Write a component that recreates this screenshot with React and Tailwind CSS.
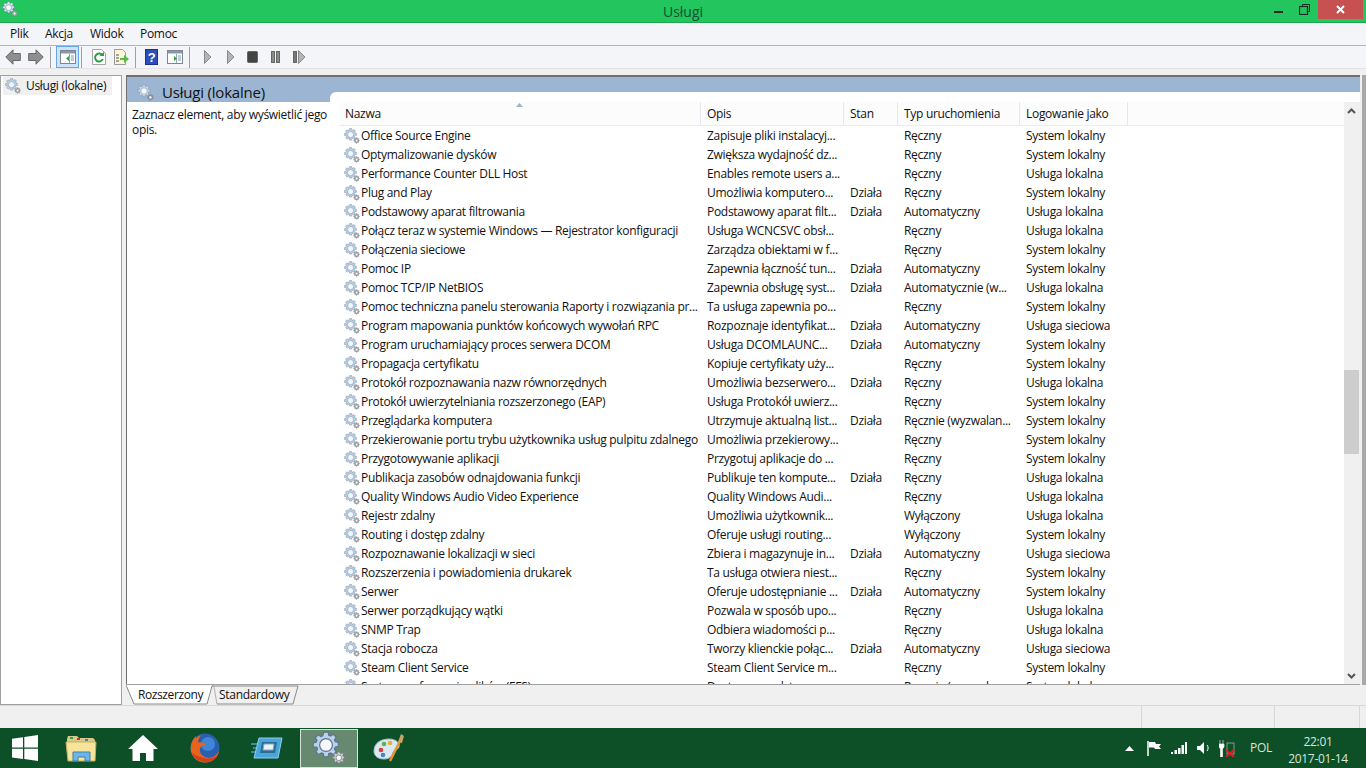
import React from "react";

const services = [
  ["Office Source Engine", "Zapisuje pliki instalacyj...", "", "Ręczny", "System lokalny"],
  ["Optymalizowanie dysków", "Zwiększa wydajność dz...", "", "Ręczny", "System lokalny"],
  ["Performance Counter DLL Host", "Enables remote users a...", "", "Ręczny", "Usługa lokalna"],
  ["Plug and Play", "Umożliwia komputero...", "Działa", "Ręczny", "System lokalny"],
  ["Podstawowy aparat filtrowania", "Podstawowy aparat filt...", "Działa", "Automatyczny", "Usługa lokalna"],
  ["Połącz teraz w systemie Windows — Rejestrator konfiguracji", "Usługa WCNCSVC obsł...", "", "Ręczny", "Usługa lokalna"],
  ["Połączenia sieciowe", "Zarządza obiektami w f...", "", "Ręczny", "System lokalny"],
  ["Pomoc IP", "Zapewnia łączność tun...", "Działa", "Automatyczny", "System lokalny"],
  ["Pomoc TCP/IP NetBIOS", "Zapewnia obsługę syst...", "Działa", "Automatycznie (w...", "Usługa lokalna"],
  ["Pomoc techniczna panelu sterowania Raporty i rozwiązania pr...", "Ta usługa zapewnia po...", "", "Ręczny", "System lokalny"],
  ["Program mapowania punktów końcowych wywołań RPC", "Rozpoznaje identyfikat...", "Działa", "Automatyczny", "Usługa sieciowa"],
  ["Program uruchamiający proces serwera DCOM", "Usługa DCOMLAUNC...", "Działa", "Automatyczny", "System lokalny"],
  ["Propagacja certyfikatu", "Kopiuje certyfikaty uży...", "", "Ręczny", "System lokalny"],
  ["Protokół rozpoznawania nazw równorzędnych", "Umożliwia bezserwero...", "Działa", "Ręczny", "Usługa lokalna"],
  ["Protokół uwierzytelniania rozszerzonego (EAP)", "Usługa Protokół uwierz...", "", "Ręczny", "System lokalny"],
  ["Przeglądarka komputera", "Utrzymuje aktualną list...", "Działa", "Ręcznie (wyzwalan...", "System lokalny"],
  ["Przekierowanie portu trybu użytkownika usług pulpitu zdalnego", "Umożliwia przekierowy...", "", "Ręczny", "System lokalny"],
  ["Przygotowywanie aplikacji", "Przygotuj aplikacje do ...", "", "Ręczny", "System lokalny"],
  ["Publikacja zasobów odnajdowania funkcji", "Publikuje ten kompute...", "Działa", "Ręczny", "Usługa lokalna"],
  ["Quality Windows Audio Video Experience", "Quality Windows Audi...", "", "Ręczny", "Usługa lokalna"],
  ["Rejestr zdalny", "Umożliwia użytkownik...", "", "Wyłączony", "Usługa lokalna"],
  ["Routing i dostęp zdalny", "Oferuje usługi routing...", "", "Wyłączony", "System lokalny"],
  ["Rozpoznawanie lokalizacji w sieci", "Zbiera i magazynuje in...", "Działa", "Automatyczny", "Usługa sieciowa"],
  ["Rozszerzenia i powiadomienia drukarek", "Ta usługa otwiera niest...", "", "Ręczny", "System lokalny"],
  ["Serwer", "Oferuje udostępnianie ...", "Działa", "Automatyczny", "System lokalny"],
  ["Serwer porządkujący wątki", "Pozwala w sposób upo...", "", "Ręczny", "Usługa lokalna"],
  ["SNMP Trap", "Odbiera wiadomości p...", "", "Ręczny", "Usługa lokalna"],
  ["Stacja robocza", "Tworzy klienckie połąc...", "Działa", "Automatyczny", "Usługa sieciowa"],
  ["Steam Client Service", "Steam Client Service m...", "", "Ręczny", "System lokalny"],
  ["System szyfrowania plików (EFS)", "Dostarcza podstawow...", "", "Ręcznie (wyzwalan...", "System lokalny"],
];

const gearPath =
  "M10.2 1h3.6l.5 2.6 1.7.7 2.2-1.5 2.5 2.5-1.5 2.2.7 1.7 2.6.5v3.6l-2.6.5-.7 1.7 1.5 2.2-2.5 2.5-2.2-1.5-1.7.7-.5 2.6h-3.6l-.5-2.6-1.7-.7-2.2 1.5-2.5-2.5 1.5-2.2-.7-1.7L1 13.8v-3.6l2.6-.5.7-1.7-1.5-2.2 2.5-2.5 2.2 1.5 1.700-.7z";

const Gears = ({ size = 16, main = "#b9cfe6", small = "#9aa2aa", stroke = "#8296ad" }) => (
  <svg width={size} height={size} viewBox="0 0 32 32" className="shrink-0">
    <g transform="scale(1.1)">
      <path d={gearPath} fill={main} stroke={stroke} strokeWidth="1" />
      <circle cx="12" cy="12" r="5.500" fill="#f4f8fc" stroke={stroke} strokeWidth="1" />
    </g>
    <g transform="translate(19 19) scale(0.52)">
      <path d={gearPath} fill={small} stroke="#777" strokeWidth="1.4" />
      <circle cx="12" cy="12" r="5" fill="#fff" stroke="#777" strokeWidth="1.4" />
    </g>
  </svg>
);

const Sep = () => <div className="h-[21px] w-px shrink-0 bg-[#a0a0a0]" />;

const WindowIcon = ({ arrow = "M8 10l-3 2.5L8 15z" }) => (
  <svg width="16" height="16" viewBox="0 0 16 16">
    <rect x=".5" y="1.5" width="15" height="13" fill="#fff" stroke="#7b8794" />
    <rect x="1" y="2" width="14" height="2.5" fill="#8b97a5" />
    <path d="M9.500 5v9" stroke="#9aa5b1" />
    <path d="M11 7h3M11 9h3M11 11h3" stroke="#7a9cc0" />
    <path d={arrow} transform="translate(1 -3)" fill="#2f9e44" />
  </svg>
);

const Toolbar = () => (
  <div className="flex h-[22px] shrink-0 items-center bg-[#f4f5f8] pl-[5px]">
    <svg width="16" height="16" viewBox="0 0 16 16" className="mr-[7px]">
      <path d="M.8 8L8 .8V4.500h7.300v7H8v3.700z" fill="#8f8f8f" stroke="#686868" />
    </svg>
    <svg width="16" height="16" viewBox="0 0 16 16" className="mr-[6px]">
      <path d="M15.200 8L8 .8V4.500H.7v7H8v3.700z" fill="#8f8f8f" stroke="#686868" />
    </svg>
    <Sep />
    <div className="ml-[5px] mr-[2px] flex h-[22px] w-[23px] items-center justify-center border border-[#66a7e8] bg-[#cce4f7]">
      <WindowIcon />
    </div>
    <Sep />
    <svg width="14" height="16" viewBox="0 0 14 16" className="ml-[10px]">
      <path d="M.5.5h9l4 4v11H.5z" fill="#fff" stroke="#a5a5a5" />
      <path d="M10.500 6.500a4 4 0 1 0 .3 3.500" fill="none" stroke="#2f9e44" strokeWidth="2" />
      <path d="M7.500 7h4.500V2.800z" fill="#2f9e44" />
    </svg>
    <svg width="17" height="16" viewBox="0 0 17 16" className="ml-[7px] mr-[5px]">
      <path d="M1.500.5h8l3 3v12h-11z" fill="#fbf5d8" stroke="#9a9a9a" />
      <path d="M3 6h3M3 9h3M3 12h3" stroke="#555" />
      <path d="M7 9h4V6l5 4-5 4v-3H7z" fill="#58b947" />
    </svg>
    <Sep />
    <div className="ml-[9px] mr-[9px] flex h-[16px] w-[13px] items-center justify-center border border-[#1c2f8f] bg-[#2c4dbb] font-['Liberation_Sans',sans-serif] text-[13px] font-bold leading-none text-white">
      ?
    </div>
    <div className="mr-[6px] flex">
      <WindowIcon arrow="M6 10l3 2.500L6 15z" />
    </div>
    <Sep />
    <svg width="102" height="16" viewBox="0 0 102 16" className="ml-[14px]">
      <path d="M.5 1.500l6.500 6.500-6.500 6.500z" fill="#b4b4b4" stroke="#8a8a8a" />
      <path d="M23.500 1.500l6.500 6.500-6.500 6.500z" fill="#b4b4b4" stroke="#8a8a8a" />
      <rect x="43.500" y="2.500" width="10" height="11" rx="1" fill="#444" stroke="#666" />
      <rect x="67.500" y="2.500" width="3" height="11" fill="#8a8a8a" stroke="#666" />
      <rect x="72.500" y="2.500" width="3" height="11" fill="#8a8a8a" stroke="#666" />
      <rect x="89.500" y="2.500" width="3" height="11" fill="#777" stroke="#666" />
      <path d="M94.500 1.500l6.500 6.500-6.500 6.500z" fill="#b4b4b4" stroke="#8a8a8a" />
    </svg>
  </div>
);

const Row = ({ row }) => (
  <div className="flex h-[19px] items-center whitespace-nowrap text-[12px] leading-[19px] text-[#111]">
    <div className="flex w-[362px] shrink-0 items-center pl-[5px]">
      <Gears />
      <span className="ml-[1px]">{row[0]}</span>
    </div>
    <div className="w-[143px] shrink-0 pl-[6px]">{row[1]}</div>
    <div className="w-[54px] shrink-0 pl-[6px]">{row[2]}</div>
    <div className="w-[122px] shrink-0 pl-[6px]">{row[3]}</div>
    <div className="pl-[6px]">{row[4]}</div>
  </div>
);

const Head = ({ w, children }) => (
  <div className={`flex h-full shrink-0 items-center border-r border-[#e3e8ef] pl-[6px] ${w}`}>{children}</div>
);

export default function App() {
  return (
    <div className="flex h-[768px] w-[1366px] flex-col overflow-hidden bg-[#f0f0f0] font-['Open_Sans',sans-serif] text-[12px] tracking-[-0.3px] text-[#111]">
      {/* title bar */}
      <div className="relative flex h-[23px] shrink-0 items-center justify-center border-b border-[#1ca64e] bg-[#22c55e] text-[14px] tracking-normal text-[#14532d]">
        <div className="absolute left-[2px] top-[1px]">
          <Gears size={16} main="#d7e6f3" small="#a8b9c7" stroke="#5b7c8c" />
        </div>
        Usługi
        <div className="absolute right-[3px] top-0 flex items-start">
          <div className="mr-[16px] mt-[11px] h-[2px] w-[9px] bg-[#1d2b22]" />
          <svg width="11" height="11" viewBox="0 0 11 11" className="mr-[8px] mt-[4px]">
            <path d="M3.500 2.500v-2h7v7h-2" fill="none" stroke="#1d2b22" />
            <rect x=".5" y="2.500" width="8" height="8" fill="none" stroke="#1d2b22" strokeWidth="1.2" />
          </svg>
          <div className="flex h-[19px] w-[45px] items-center justify-center bg-[#c75050]">
            <svg width="9" height="9" viewBox="0 0 9 9">
              <path d="M1 1l7 7M8 1L1 8" stroke="#fff" strokeWidth="2" />
            </svg>
          </div>
        </div>
      </div>

      {/* menu */}
      <div className="flex h-[23px] shrink-0 items-center border-b border-[#b5b5b5] bg-[#f4f5f8] pl-[10px]">
        <span className="w-[35px]">Plik</span>
        <span className="w-[45px]">Akcja</span>
        <span className="w-[50px]">Widok</span>
        <span>Pomoc</span>
      </div>

      <Toolbar />

      {/* panes */}
      <div className="flex h-[637px] shrink-0 border-t border-[#e4e4e4] pt-[6px]">
        <div className="h-[630px] w-[122px] shrink-0 border border-[#a0a0a0] bg-white pl-[2px]">
          <div className="flex h-[19px] w-[109px] items-center gap-[5px] whitespace-nowrap bg-[#f0f0f0] pl-[2px] text-[12px]">
            <Gears />
            <span>Usługi (lokalne)</span>
          </div>
        </div>

        <div className="ml-[4px] flex w-[1234px] shrink-0 flex-col">
          <div className="flex h-[609px] flex-col border-l border-t-2 border-[#6f6f6f]">
            <div className="relative flex h-[25px] shrink-0 items-center gap-[8px] bg-[#9bb5d2] pl-[10px] pt-[5px] text-[15px] tracking-[-0.2px] text-[#111]">
              <Gears size={17} main="#c5d6e8" small="#8c9cad" />
              <span>Usługi (lokalne)</span>
              <div className="absolute bottom-0 left-[203px] right-0 h-[10px] rounded-tl-[6px] bg-white" />
            </div>

            <div className="flex min-h-0 flex-1 bg-white">
              <div className="w-[212px] shrink-0 pl-[5px] pr-[2px] pt-[5px] text-[12px] leading-[15px]">
                Zaznacz element, aby wyświetlić jego opis.
              </div>

              <div className="relative min-w-0 flex-1 overflow-hidden">
                <div className="relative flex h-[24px] items-center border-b border-[#e3eef8] bg-[#fcfcfc] text-[12px]">
                  <Head w="w-[362px]">Nazwa</Head>
                  <Head w="w-[143px]">Opis</Head>
                  <Head w="w-[54px]">Stan</Head>
                  <Head w="w-[122px]">Typ uruchomienia</Head>
                  <Head w="w-[108px]">Logowanie jako</Head>
                  <svg width="7" height="4" viewBox="0 0 7 4" className="absolute left-[177px] top-[1px]">
                    <path d="M0 4l3.500-4L7 4z" fill="#9db4c8" />
                  </svg>
                </div>
                <div className="h-[558px] overflow-hidden">
                  {services.map((s) => (
                    <Row key={s[0]} row={s} />
                  ))}
                </div>

                {/* scrollbar */}
                <div className="absolute bottom-0 right-0 top-0 flex w-[16px] flex-col items-start bg-[#f0f0f0]">
                  <div className="flex h-[17px] w-[15px] items-center justify-center">
                    <svg width="9" height="6" viewBox="0 0 9 6">
                      <path d="M1 5l3.500-3.500L8 5" fill="none" stroke="#555" strokeWidth="2" />
                    </svg>
                  </div>
                  <div className="mt-[251px] h-[84px] w-[15px] bg-[#cdcdcd]" />
                  <div className="flex-1" />
                  <div className="flex h-[17px] w-[15px] items-center justify-center">
                    <svg width="9" height="6" viewBox="0 0 9 6">
                      <path d="M1 1l3.500 3.500L8 1" fill="none" stroke="#555" strokeWidth="2" />
                    </svg>
                  </div>
                </div>
              </div>
            </div>
          </div>

          {/* tabs */}
          <div className="relative flex h-[21px] items-center whitespace-nowrap border-t border-[#a0a0a0] pl-[12px] text-[12px]">
            <svg width="180" height="21" viewBox="0 0 180 21" className="absolute left-0 top-[-1px]">
              <path d="M0 1L8 20H81L86 2Z" fill="#fff" />
              <path d="M0 1L8 20H81L86 2" fill="none" stroke="#8a8a8a" />
              <path d="M86 2Q88 2 88 3L91 20" fill="none" stroke="#b0b0b0" />
              <path d="M86 2H172L167 20H91" fill="none" stroke="#8a8a8a" />
            </svg>
            <span className="relative w-[81px] tracking-[-0.4px]">Rozszerzony</span>
            <span className="relative">Standardowy</span>
          </div>
        </div>

        <div className="ml-[2px] h-[610px] w-[4px] shrink-0 bg-[#a9a9a9]" />
      </div>

      {/* status bar */}
      <div className="flex h-[23px] shrink-0 justify-end border-t border-[#d7d7d7] bg-[#f0f0f0]">
        <div className="h-full w-[133px] border-l border-[#d7d7d7]" />
        <div className="h-full w-[85px] border-l border-[#d7d7d7]" />
        <div className="h-full w-[7px] border-l border-[#d7d7d7]" />
      </div>

      {/* taskbar */}
      <div className="flex h-[40px] shrink-0 items-center justify-between bg-[#0d4f27] text-white">
        <div className="flex h-full items-center">
          <div className="flex w-[50px] justify-center">
            <svg width="26" height="26" viewBox="0 0 26 26">
              <path d="M0 3.700l11-1.500v10.300H0zM12.300 2L26 0v12.500H12.300zM0 13.800h11v10.300L0 22.600zM12.300 13.800H26V26l-13.700-2z" fill="#fff" />
            </svg>
          </div>
          <div className="flex w-[62px] justify-center">
            <svg width="32" height="28" viewBox="0 0 32 28">
              <path d="M2 5l1-3h9l2 2h14l2 2v3H2z" fill="#d9c98a" />
              <rect x="5" y="3" width="3" height="2" fill="#2f9e44" />
              <rect x="12" y="4" width="3" height="2" fill="#c0392b" />
              <rect x="20" y="5" width="3" height="2" fill="#2e86de" />
              <path d="M1 8h30l-1 19H3z" fill="#f6e49a" stroke="#c8ae5e" />
              <path d="M8 18h17v9h-5v-4h-7v4H8z" fill="#6cb6e6" stroke="#3c7fae" />
            </svg>
          </div>
          <div className="flex w-[62px] justify-center">
            <svg width="30" height="26" viewBox="0 0 30 26">
              <path d="M15 0L0 14h4.500v12H12v-8h6v8h7.500V14H30z" fill="#fff" />
            </svg>
          </div>
          <div className="flex w-[62px] justify-center">
            <svg width="30" height="30" viewBox="0 0 30 30">
              <circle cx="15" cy="15" r="14.500" fill="#2a5fb0" />
              <circle cx="18" cy="11" r="7" fill="#3f87d6" />
              <path d="M6 3C1 8-.5 15 1.500 20c2.500 7 9 10 15 9.500 7-.5 12-6 12.500-12-2 5-7 8-12 7-5-1-8-5-7-9 1-3 4-3 6-3-1-3-5-4-8-3 .5-3 1-5 3-7-3 0-4 2-5 3z" fill="#e8641b" />
              <path d="M2 20c3 7 9 9.500 15 9 5-.5 9-3 11-7-4 3-9 4-14 3-5-1-9-3-12-5z" fill="#d2421a" />
            </svg>
          </div>
          <div className="flex w-[62px] justify-center">
            <svg width="32" height="22" viewBox="0 0 32 22">
              <path d="M0 7h7M2 11h5M0 15h6" stroke="#4c9fca" strokeWidth="1.500" />
              <path d="M8 1h23l-4 20H3z" fill="#48a6dd" stroke="#8fd0f0" />
              <path d="M11 5h15l-2 11H9z" fill="#2e6d92" />
              <path d="M13 7h10l-1 6H12z" fill="#e8f2f8" stroke="#8ba7ba" />
            </svg>
          </div>
          <div className="ml-[2px] flex h-[39px] w-[58px] items-center justify-center border border-[#d9e3dc] bg-[#66896f]">
            <Gears size={34} main="#b9d3ee" small="#c5ced6" stroke="#5e738a" />
          </div>
          <div className="ml-[2px] flex w-[58px] justify-center">
            <svg width="32" height="30" viewBox="0 0 32 30">
              <path d="M1 18C1 10 8 6 16 6c7 0 11 4 10 8-1 3-5 2-6 5-1 4-3 7-9 7-6 0-10-3-10-8z" fill="#dce8f0" stroke="#a9bfce" />
              <circle cx="8" cy="17" r="2.300" fill="#d9403a" />
              <circle cx="11" cy="11" r="2.300" fill="#5db34c" />
              <circle cx="17" cy="10" r="2.300" fill="#e2b13c" />
              <circle cx="10" cy="22" r="2.300" fill="#3d87d0" />
              <path d="M17 28L27 8" stroke="#e8952e" strokeWidth="2.500" />
              <path d="M25 9l3-8 3 2-2 7z" fill="#c9a46a" />
            </svg>
          </div>
        </div>

        <div className="flex h-full items-center pr-[19px]">
          <svg width="9" height="5" viewBox="0 0 9 5" className="mr-[13px]">
            <path d="M0 5l4.500-5L9 5z" fill="#fff" />
          </svg>
          <svg width="15" height="15" viewBox="0 0 15 15" className="mr-[9px]">
            <path d="M1 0v15" stroke="#fff" strokeWidth="1.500" />
            <path d="M2 1h6l1 2h5l-2 2.500 2 2.500H8L7 6.500H2z" fill="#fff" />
          </svg>
          <svg width="16" height="12" viewBox="0 0 16 12" className="mr-[10px]">
            <path d="M0 10h2v2H0zM3.500 8h2.500v4H3.500zM7 6h2.500v6H7zM10.500 3H13v9h-2.500zM14 0h2v12h-2z" fill="#fff" />
          </svg>
          <svg width="13" height="12" viewBox="0 0 13 12" className="mr-[9px]">
            <path d="M0 4h3l4-4v12L3 8H0z" fill="#fff" />
            <path d="M10 3c1.500 2 1.500 4 0 6" stroke="#fff" fill="none" />
          </svg>
          <svg width="16" height="17" viewBox="0 0 16 17" className="mr-[15px]">
            <path d="M1 0v4M4 0v4M0 4h5v3l-1.500 2v8h-2V9L0 7z" fill="#fff" stroke="#fff" strokeWidth=".6" />
            <rect x="8" y="3" width="7" height="11" fill="none" stroke="#8a9c90" />
            <path d="M7 10l8 7M15 10l-8 7" stroke="#e01b24" strokeWidth="2" />
          </svg>
          <span className="mr-[17px] text-[12px] text-[#d7e6dc]">POL</span>
          <div className="flex w-[58px] flex-col items-center pt-[3px] text-[12px] leading-[17px] text-[#d7e6dc]">
            <span>22:01</span>
            <span className="whitespace-nowrap">2017-01-14</span>
          </div>
        </div>
      </div>
    </div>
  );
}
